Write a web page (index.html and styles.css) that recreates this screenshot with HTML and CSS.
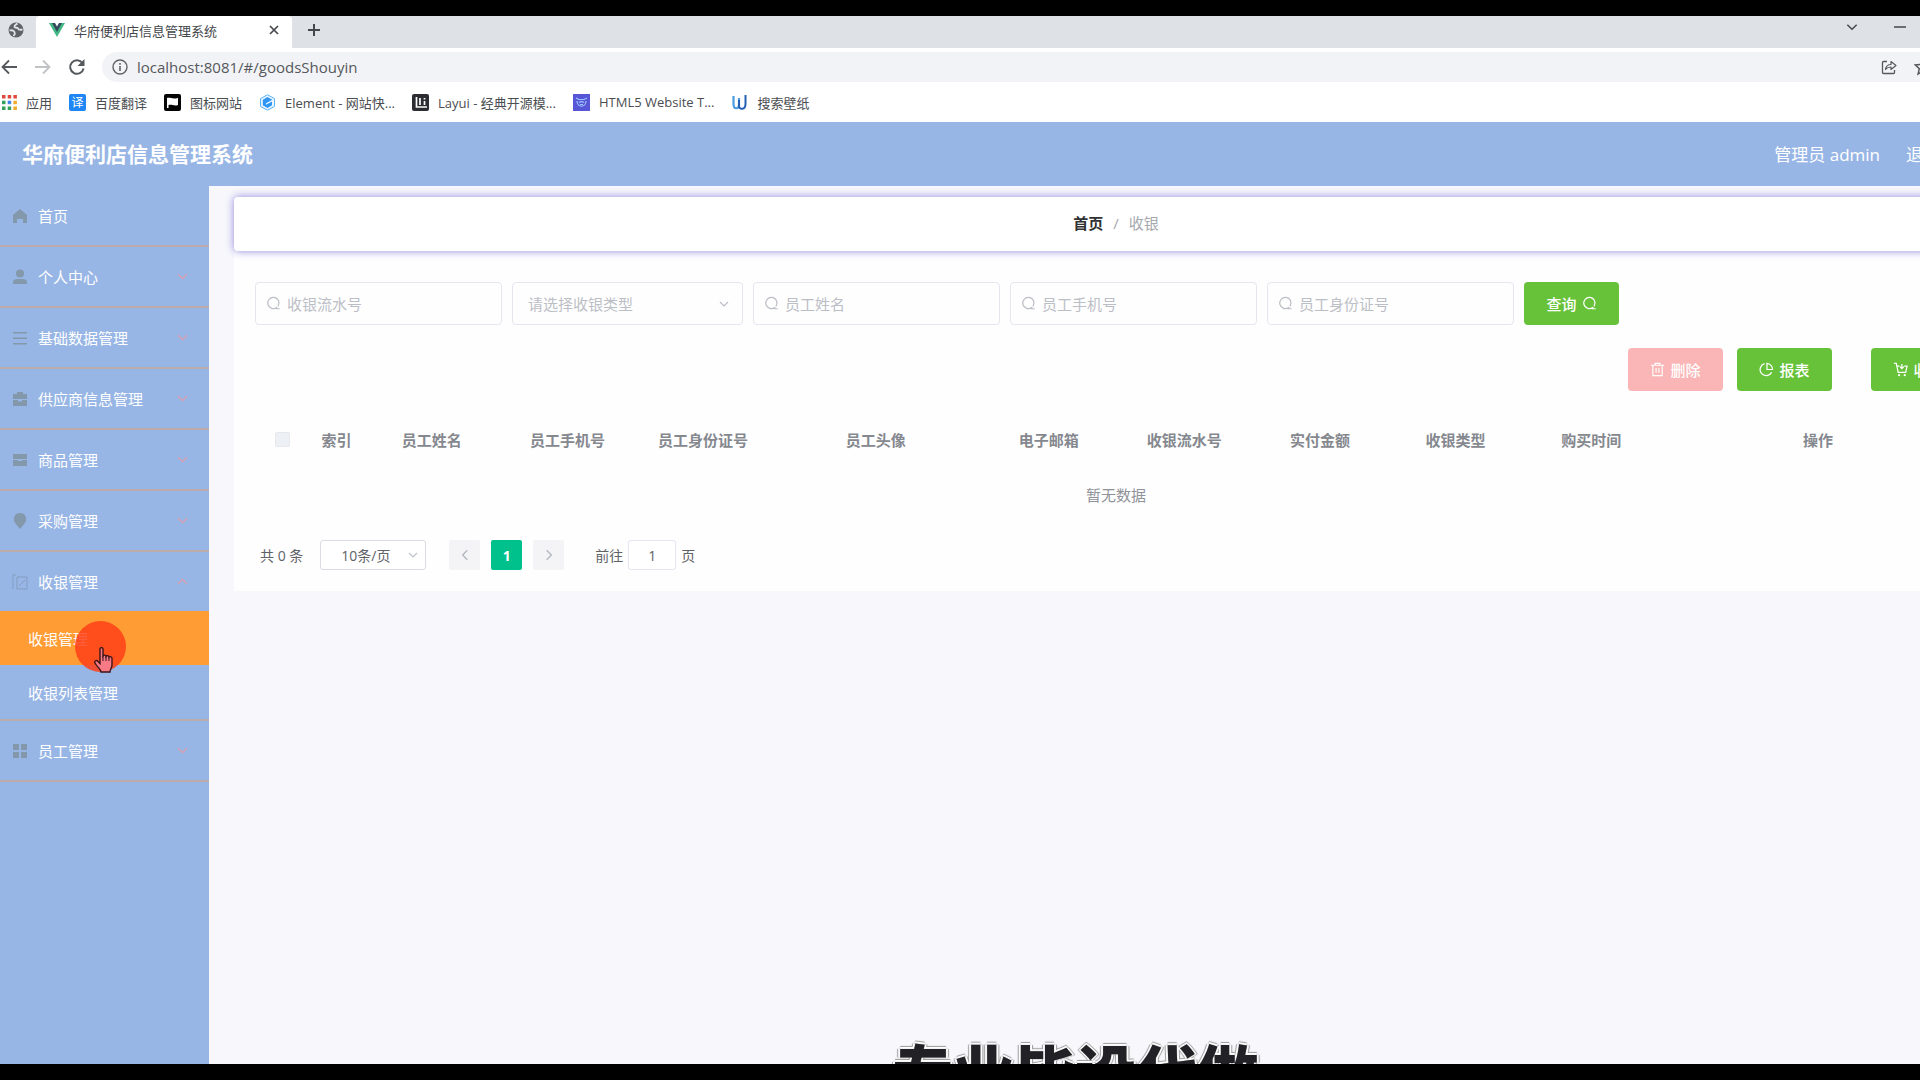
FILE: index.html
```html
<!DOCTYPE html>
<html lang="zh-CN">
<head>
    <meta charset="UTF-8">
    <meta name="viewport" content="width=device-width, initial-scale=1.0">
    <title>华府便利店信息管理系统</title>
    <link rel="stylesheet" href="styles.css">
</head>
<body>
    <svg class="sprite" aria-hidden="true">
        <symbol id="i-search" viewBox="0 0 16 16"><path d="M11.6 12.2A6 6 0 1 1 13 10.6M10.8 13.6h3.4" fill="none" stroke="currentColor" stroke-width="1.3" stroke-linecap="round"/></symbol>
        <symbol id="i-down" viewBox="0 0 12 12"><path d="M2 4l4 4 4-4" fill="none" stroke="currentColor" stroke-width="1.2"/></symbol>
        <symbol id="i-close" viewBox="0 0 12 12"><path d="M2 2l8 8M10 2l-8 8" stroke="currentColor" stroke-width="1.7"/></symbol>
    </svg>

    <div class="screen">
        <div class="window">
            <div class="tab-strip">
                <div class="tab tab-small">
                    <svg width="16" height="16" viewBox="0 0 16 16"><circle cx="8" cy="8" r="7.500" fill="#5f6368"/><path d="M1.500 8.500c2-.5 4 0 5 1.500s0 2.500-1 4M9.500 1.500c-2 1.500-3.500 2-3 3.500s3 0 3.500 1.500 2 1.500 4.500 1" fill="none" stroke="#dee1e6" stroke-width="1.800"/></svg>
                </div>
                <div class="tab tab-active">
                    <svg width="16" height="16" viewBox="0 0 16 16"><path d="M0 1h16L8 15z" fill="#41b883"/><path d="M3 1h10L8 10z" fill="#35495e"/><path d="M6 1h4L8 4.500z" fill="#fff"/></svg>
                    <span class="tab-title">华府便利店信息管理系统</span>
                    <button class="icon-btn" aria-label="关闭标签页"><svg width="12" height="12"><use href="#i-close"/></svg></button>
                </div>
                <button class="icon-btn new-tab" aria-label="新标签页"><svg width="14" height="14" viewBox="0 0 14 14"><path d="M7 1v12M1 7h12" stroke="currentColor" stroke-width="2"/></svg></button>
                <div class="window-controls">
                    <button class="icon-btn" aria-label="搜索标签页"><svg width="14" height="14"><use href="#i-down"/></svg></button>
                    <button class="icon-btn" aria-label="最小化"><svg width="12" height="12" viewBox="0 0 12 12"><path d="M0 6h12" stroke="currentColor" stroke-width="1.500"/></svg></button>
                    <button class="icon-btn" aria-label="最大化"><svg width="12" height="12" viewBox="0 0 12 12"><path d="M1 1h10v10H1z" fill="none" stroke="currentColor"/></svg></button>
                    <button class="icon-btn" aria-label="关闭"><svg width="12" height="12"><use href="#i-close"/></svg></button>
                </div>
            </div>

            <div class="toolbar">
                <button class="icon-btn" aria-label="后退"><svg width="18" height="18" viewBox="0 0 18 18"><path d="M17 9H3M9 2.500L2.500 9 9 15.500" fill="none" stroke="currentColor" stroke-width="1.800"/></svg></button>
                <button class="icon-btn is-muted" aria-label="前进"><svg width="18" height="18" viewBox="0 0 18 18"><path d="M1 9h14M9 2.500L15.500 9 9 15.500" fill="none" stroke="currentColor" stroke-width="1.800"/></svg></button>
                <button class="icon-btn" aria-label="刷新"><svg width="18" height="18" viewBox="0 0 18 18"><path d="M14.500 5A6.800 6.800 0 1 0 15.600 10.500" fill="none" stroke="currentColor" stroke-width="2"/><path d="M16.500 1v7h-7z" fill="currentColor"/></svg></button>
                <div class="address">
                    <svg width="16" height="16" viewBox="0 0 16 16"><circle cx="8" cy="8" r="7" fill="none" stroke="#5f6368" stroke-width="1.400"/><path d="M8 7v5M8 4v1.700" stroke="#5f6368" stroke-width="1.600"/></svg>
                    <input type="text" value="localhost:8081/#/goodsShouyin" aria-label="地址">
                    <button class="icon-btn" aria-label="分享"><svg width="16" height="16" viewBox="0 0 16 16"><path d="M6 2.500H2.500a1 1 0 0 0-1 1v10a1 1 0 0 0 1 1h10a1 1 0 0 0 1-1V11" fill="none" stroke="currentColor" stroke-width="1.300"/><path d="M4.500 10.500c.5-3.500 2.500-5 5.500-5v-3L15 6.500 10 10.500V8c-2.500 0-4 .6-5.500 2.500z" fill="none" stroke="currentColor" stroke-width="1.200" stroke-linejoin="round"/></svg></button>
                    <button class="icon-btn" aria-label="收藏"><svg width="18" height="18" viewBox="0 0 18 18"><path d="M9 1.500l2.300 5 5.400.5-4 3.700 1.200 5.300L9 13.200 4.100 16l1.200-5.300-4-3.700 5.400-.5z" fill="none" stroke="currentColor" stroke-width="1.500"/></svg></button>
                </div>
            </div>

            <nav class="bookmarks" aria-label="书签">
                <a href="#"><svg width="15" height="15" viewBox="0 0 15 15"><path d="M0 0h3.500v3.500H0zM5.700 0h3.500v3.500H5.700zM11.400 0h3.500v3.500h-3.500z" fill="#e0483c"/><path d="M0 5.700h3.500v3.500H0z" fill="#34a058"/><path d="M5.700 5.700h3.500v3.500H5.700z" fill="#4285e4"/><path d="M11.400 5.700h3.500v3.500h-3.500zM11.400 11.400h3.500v3.500h-3.500z" fill="#f0ab28"/><path d="M0 11.400h3.500v3.500H0zM5.700 11.400h3.500v3.500H5.700z" fill="#34a058"/></svg><span>应用</span></a>
                <a href="#"><i class="fav-text">译</i><span>百度翻译</span></a>
                <a href="#"><svg width="17" height="17" viewBox="0 0 17 17"><rect width="17" height="17" rx="2" fill="#050505"/><path d="M3 14V4c3-1 5 1.500 11 0v7c-4 1.500-6-1-9.500 0v3z" fill="#fff"/></svg><span>图标网站</span></a>
                <a href="#"><svg width="17" height="17" viewBox="0 0 17 17"><path d="M8.500.8l7 3.800v7.800l-7 3.800-7-3.800V4.600z" fill="#eaf5ff" stroke="#5ab4fa"/><path d="M8.500 3l4.800 2.700L7 9.200v1.500l6-3.200v3.800l-4.500 2.600-4.700-2.700V5.700z" fill="#2f96f3"/></svg><span>Element - 网站快...</span></a>
                <a href="#"><svg width="17" height="17" viewBox="0 0 17 17"><rect width="17" height="17" rx="2" fill="#2c2c33"/><path d="M4.500 3v10H15M8 4v7M12.500 7v4M12.500 4v1.500" fill="none" stroke="#fff" stroke-width="1.700"/></svg><span>Layui - 经典开源模...</span></a>
                <a href="#"><svg width="17" height="17" viewBox="0 0 17 17"><rect width="17" height="17" fill="#5656d6"/><path d="M3 4l3 1.500h5L14 4M4 7c0 7 9 7 9 0M6 8.500c1.500-1 3.500-1 5 0M7 10.500h3" fill="none" stroke="#9cc4ff" stroke-width="1.200"/></svg><span>HTML5 Website T...</span></a>
                <a href="#"><svg width="17" height="17" viewBox="0 0 17 17"><path d="M2.500 2v8c0 6 5.500 5 5.500 1V4" fill="none" stroke="#4b9de0" stroke-width="2.200"/><path d="M8 6v6c0 4 6.500 4 6.500-2V1" fill="none" stroke="#2460b4" stroke-width="2"/></svg><span>搜索壁纸</span></a>
            </nav>

            <header class="header">
                <h1>华府便利店信息管理系统</h1>
                <div class="user">
                    <span>管理员 admin</span>
                    <a href="#">退出登录</a>
                </div>
            </header>

            <div class="body">
                <aside class="sidebar">
                    <ul class="menu">
                        <li><a href="#"><svg viewBox="0 0 16 16"><path d="M8 1L1 7v8h4v-4h6v4h4V7z"/></svg><span>首页</span></a></li>
                        <li><a href="#"><svg viewBox="0 0 16 16"><circle cx="8" cy="4.500" r="4"/><path d="M1 15v-2c0-2 2-3 4-3h6c2 0 4 1 4 3v2z"/></svg><span>个人中心</span><svg class="arrow"><use href="#i-down"/></svg></a></li>
                        <li><a href="#"><svg viewBox="0 0 16 16"><path d="M1 2h14v1.500H1zM1 7.500h14V9H1zM1 13h14v1.500H1z"/></svg><span>基础数据管理</span><svg class="arrow"><use href="#i-down"/></svg></a></li>
                        <li><a href="#"><svg viewBox="0 0 16 16"><path d="M5 3V1h6v2h4v5H1V3zM1 9h5v1.500h4V9h5v6H1z"/></svg><span>供应商信息管理</span><svg class="arrow"><use href="#i-down"/></svg></a></li>
                        <li><a href="#"><svg viewBox="0 0 16 16"><path d="M1 2h14v5H1zM1 8h5v1h4V8h5v6H1z"/></svg><span>商品管理</span><svg class="arrow"><use href="#i-down"/></svg></a></li>
                        <li><a href="#"><svg viewBox="0 0 16 16"><path d="M8 16L3 10C0 5 3 0 8 0s8 5 5 10z"/></svg><span>采购管理</span><svg class="arrow"><use href="#i-down"/></svg></a></li>
                        <li>
                            <a href="#"><svg viewBox="0 0 16 16"><path d="M1 1v14M5 3h10v12H5zM7 12l6-6M1 1h3" fill="none" stroke="currentColor"/></svg><span>收银管理</span><svg class="arrow up"><use href="#i-down"/></svg></a>
                            <ul class="submenu">
                                <li class="active"><a href="#">收银管理</a></li>
                                <li><a href="#">收银列表管理</a></li>
                            </ul>
                        </li>
                        <li><a href="#"><svg viewBox="0 0 16 16"><path d="M1 1h6v6H1zM9 1h6v6H9zM1 9h6v6H1zM9 9h6v6H9z"/></svg><span>员工管理</span><svg class="arrow"><use href="#i-down"/></svg></a></li>
                    </ul>
                </aside>

                <main class="main">
                    <nav class="breadcrumb" aria-label="面包屑">
                        <a href="#">首页</a><span>/</span><span>收银</span>
                    </nav>

                    <section class="card">
                        <form class="search-form">
                            <label class="field"><svg><use href="#i-search"/></svg><input type="text" placeholder="收银流水号" aria-label="收银流水号"></label>
                            <label class="field field-select">
                                <select aria-label="收银类型"><option>请选择收银类型</option></select>
                                <svg><use href="#i-down"/></svg>
                            </label>
                            <label class="field"><svg><use href="#i-search"/></svg><input type="text" placeholder="员工姓名" aria-label="员工姓名"></label>
                            <label class="field"><svg><use href="#i-search"/></svg><input type="text" placeholder="员工手机号" aria-label="员工手机号"></label>
                            <label class="field"><svg><use href="#i-search"/></svg><input type="text" placeholder="员工身份证号" aria-label="员工身份证号"></label>
                            <button type="button" class="btn btn-success">查询<svg><use href="#i-search"/></svg></button>
                        </form>

                        <div class="actions">
                            <button class="btn btn-danger" disabled><svg viewBox="0 0 16 16"><path d="M1 3.500h14M5.500 3.500V1.500h5v2M3 3.500v11h10v-11M6.500 6.500v5M9.500 6.500v5" fill="none" stroke="currentColor" stroke-width="1.200"/></svg>删除</button>
                            <button class="btn btn-success"><svg viewBox="0 0 16 16"><path d="M8.500 1.500V8h6A6.500 6.500 0 0 0 8.500 1.500zM13.500 11A6.500 6.500 0 1 1 6 1.800" fill="none" stroke="currentColor" stroke-width="1.300"/></svg>报表</button>
                            <button class="btn btn-success btn-cash"><svg viewBox="0 0 16 16"><path d="M1 1.500h2.500l2 9.500h8L15 4.500h-3M4.200 4.500H7M9.500 2v5M7.500 5l2 2 2-2" fill="none" stroke="currentColor" stroke-width="1.300"/><circle cx="6.500" cy="14" r="1.200" fill="currentColor"/><circle cx="12.500" cy="14" r="1.200" fill="currentColor"/></svg>收银</button>
                        </div>

                        <table class="table">
                            <colgroup>
                                <col class="col-check"><col class="col-index"><col><col><col><col class="col-photo"><col><col><col><col><col><col class="col-ops">
                            </colgroup>
                            <thead>
                                <tr>
                                    <th scope="col"><input type="checkbox" disabled aria-label="全选"></th>
                                    <th scope="col">索引</th>
                                    <th scope="col">员工姓名</th>
                                    <th scope="col">员工手机号</th>
                                    <th scope="col">员工身份证号</th>
                                    <th scope="col">员工头像</th>
                                    <th scope="col">电子邮箱</th>
                                    <th scope="col">收银流水号</th>
                                    <th scope="col">实付金额</th>
                                    <th scope="col">收银类型</th>
                                    <th scope="col">购买时间</th>
                                    <th scope="col">操作</th>
                                </tr>
                            </thead>
                            <tbody>
                                <tr><td colspan="12">暂无数据</td></tr>
                            </tbody>
                        </table>

                        <div class="pagination">
                            <span>共 0 条</span>
                            <label class="page-size">
                                <select aria-label="每页条数"><option>10条/页</option></select>
                                <svg><use href="#i-down"/></svg>
                            </label>
                            <div class="pager">
                                <button disabled aria-label="上一页"><svg class="prev"><use href="#i-down"/></svg></button>
                                <button class="current">1</button>
                                <button disabled aria-label="下一页"><svg class="next"><use href="#i-down"/></svg></button>
                            </div>
                            <label class="jump">前往<input type="text" value="1">页</label>
                        </div>
                    </section>
                </main>
            </div>
        </div>

        <div class="click-spot">
            <svg width="22" height="27" viewBox="0 0 22 27"><path d="M7 2c0-1.800 3-1.800 3 0v7c1-1.500 3-1 3 .5 1-1.500 3-.8 3 .7 1.200-1 3-.4 3 1.300v6.500c0 3-2 4-2 7H8c0-3-4-5-6-9-1-2 1.500-3.500 3-1.500l2 2z" fill="#f77a86" stroke="#3b1518" stroke-width="1.400"/><path d="M10 9v5M13 10v4M16 11v3" stroke="#3b1518"/></svg>
        </div>
        <p class="caption">专业毕设代做</p>
    </div>
</body>
</html>
```

FILE: styles.css
```css
:root {
    --blue: #98b6e5;
    --orange: #ff9c33;
    --green: #67c23a;
    --border: #e4e6f0;
    --text: #606266;
    --placeholder: #bcbec6;
}

* {
    box-sizing: border-box;
}

body {
    margin: 0;
    background: #000;
    font-family: "Open Sans", "Noto Sans CJK SC", sans-serif;
    font-size: 15px;
    color: var(--text);
}

h1, p, ul {
    margin: 0;
    padding: 0;
}

ul {
    list-style: none;
}

a {
    color: inherit;
    text-decoration: none;
}

button, input, select {
    font: inherit;
    color: inherit;
}

button {
    border: none;
    padding: 0;
    cursor: pointer;
}

svg {
    flex: none;
}

.sprite {
    display: none;
}

/* recorded screen between the two black bars */
.screen {
    position: relative;
    height: calc(100vh - 32px);
    margin: 16px 0;
    overflow: hidden;
    background: #f7f7fc;
}

/* the window runs past the right edge of the screen */
.window {
    display: flex;
    flex-direction: column;
    width: calc(100% + 100px);
    height: 100%;
}

/* browser */
.tab-strip {
    display: flex;
    height: 32px;
    background: #dee1e5;
    color: #44474b;
}

.tab {
    display: flex;
    align-items: center;
    padding-bottom: 4px;
}

.tab-small {
    width: 36px;
    padding-left: 8px;
}

.tab-active {
    width: 256px;
    padding-left: 13px;
    padding-right: 12px;
    background: #fff;
    border-radius: 4px 4px 0 0;
    font-size: 13px;
}

.tab-title {
    flex: 1;
    margin-left: 9px;
}

.icon-btn {
    display: flex;
    align-items: center;
    justify-content: center;
    background: none;
}

.new-tab {
    margin-left: 15px;
    padding-bottom: 4px;
}

.window-controls {
    display: flex;
    margin-left: auto;
}

.window-controls .icon-btn {
    width: 48px;
    height: 22px;
}

.toolbar {
    display: flex;
    align-items: center;
    gap: 16px;
    height: 38px;
    padding: 0 76px 0 0;
    background: #fff;
    color: #55585c;
}

.is-muted {
    color: #c0c2c6;
}

.address {
    flex: 1;
    display: flex;
    align-items: center;
    gap: 9px;
    height: 30px;
    padding: 0 12px 0 10px;
    background: #f2f3f6;
    border-radius: 15px;
}

.address input {
    flex: 1;
    border: none;
    background: none;
    padding: 0;
    font-size: 15px;
    outline: none;
}

.address .icon-btn + .icon-btn {
    margin-left: 8px;
}

.bookmarks {
    display: flex;
    gap: 17px;
    height: 36px;
    padding: 0 2px 4px;
    background: #fff;
    font-size: 13px;
    color: #4a4d52;
}

.bookmarks a {
    display: flex;
    align-items: center;
    gap: 9px;
}

.fav-text {
    width: 17px;
    background: #1e86f5;
    border-radius: 2px;
    color: #fff;
    font-size: 12px;
    font-style: normal;
    line-height: 17px;
    text-align: center;
}

/* app header */
.header {
    display: flex;
    align-items: center;
    justify-content: space-between;
    height: 64px;
    padding: 0 46px 2px 22px;
    background: var(--blue);
    color: #fff;
}

.header h1 {
    font-size: 21px;
    font-weight: 700;
}

.user {
    display: flex;
    gap: 26px;
    font-size: 17px;
}

.body {
    flex: 1;
    display: flex;
    min-height: 0;
}

/* sidebar */
.sidebar {
    width: 209px;
    background: var(--blue);
    color: #fff;
}

.menu > li {
    border-bottom: 2px solid #bcabaa;
}

.menu > li > a {
    display: flex;
    align-items: center;
    height: 59px;
    padding: 0 20px 0 12px;
}

.menu svg {
    width: 16px;
    height: 16px;
    margin-right: 10px;
    fill: #8398ab;
    color: #839cc0;
}

.menu .arrow {
    width: 13px;
    height: 13px;
    margin: 0 0 0 auto;
    fill: none;
    color: #dc9fae;
}

.menu .up {
    transform: rotate(180deg);
}

.submenu a {
    display: flex;
    align-items: center;
    height: 54px;
    padding-left: 28px;
}

.submenu .active {
    background: var(--orange);
}

/* content */
.main {
    flex: 1;
    padding: 11px 22px 0 25px;
}

.breadcrumb {
    position: relative;
    display: flex;
    align-items: center;
    justify-content: center;
    gap: 10px;
    height: 54px;
    padding-bottom: 3px;
    background: #fff;
    border-radius: 4px;
    box-shadow: 0 0 8px #8f86dc;
    color: #a5a8ae;
}

.breadcrumb a {
    color: #303133;
    font-weight: 700;
}

.card {
    padding: 31px 21px 21px;
    background: #fefeff;
}

.search-form {
    display: flex;
    gap: 10px;
}

.field {
    position: relative;
    display: flex;
    align-items: center;
    width: 247px;
    height: 43px;
    border: 1px solid var(--border);
    border-radius: 4px;
    color: var(--placeholder);
}

.field svg {
    width: 15px;
    height: 15px;
    margin: 0 6px 0 10px;
}

.field input, .field select {
    flex: 1;
    min-width: 0;
    height: 100%;
    padding: 0;
    border: none;
    background: none;
    outline: none;
}

.field input::placeholder {
    color: var(--placeholder);
}

.field-select {
    width: 231px;
}

.field select {
    appearance: none;
    padding: 0 30px 0 15px;
}

.field-select svg {
    position: absolute;
    right: 12px;
    width: 12px;
    height: 12px;
    margin: 0;
    pointer-events: none;
}

.btn {
    display: flex;
    align-items: center;
    justify-content: center;
    gap: 5px;
    width: 95px;
    height: 43px;
    border-radius: 4px;
    color: #fff;
    font-weight: 500;
}

.btn svg {
    width: 15px;
    height: 15px;
}

.btn-success {
    background: var(--green);
}

.btn-danger {
    background: #fab6b6;
}

.actions {
    display: flex;
    justify-content: flex-end;
    gap: 14px;
    margin-top: 23px;
    padding-right: 11px;
}

.btn-cash {
    margin-left: 25px;
}

.table {
    width: 100%;
    margin-top: 20px;
    table-layout: fixed;
    border-collapse: collapse;
    text-align: center;
}

.table th {
    height: 56px;
    padding: 0;
    color: #85888e;
    font-weight: 700;
}

.table td {
    height: 55px;
    padding: 0;
    color: #909399;
}

.table input {
    appearance: none;
    display: block;
    width: 15px;
    height: 15px;
    margin: 0 auto;
    border: 1px solid #e6e8ee;
    border-radius: 2px;
    background: #edf0f5;
}

.col-check {
    width: 54px;
}

.col-index {
    width: 55px;
}

.col-photo {
    width: 210px;
}

.col-ops {
    width: 318px;
}

.pagination {
    display: flex;
    align-items: center;
    margin-top: 18px;
    padding-left: 5px;
    font-size: 14px;
}

.page-size {
    position: relative;
    display: flex;
    align-items: center;
    width: 106px;
    height: 30px;
    margin: 0 23px 0 17px;
}

.page-size select {
    appearance: none;
    width: 100%;
    height: 100%;
    padding: 0 20px;
    border: 1px solid #d9dce3;
    border-radius: 3px;
    background: #fff;
}

.page-size svg {
    position: absolute;
    right: 7px;
    width: 12px;
    height: 12px;
    color: #c0c4cc;
    pointer-events: none;
}

.pager {
    display: flex;
    gap: 11px;
}

.pager button {
    display: flex;
    align-items: center;
    justify-content: center;
    width: 31px;
    height: 30px;
    border-radius: 2px;
    background: #f4f4f7;
    color: #b4b8c0;
}

.pager .current {
    background: #00c08b;
    color: #fff;
    font-weight: 700;
}

.pager svg {
    width: 14px;
    height: 14px;
}

.prev {
    transform: rotate(90deg);
}

.next {
    transform: rotate(-90deg);
}

.jump {
    display: flex;
    align-items: center;
    gap: 5px;
    margin-left: 31px;
}

.jump input {
    width: 48px;
    height: 30px;
    border: 1px solid var(--border);
    border-radius: 3px;
    background: #fff;
    text-align: center;
}

/* recording overlays */
.click-spot {
    position: absolute;
    left: 75px;
    top: 605px;
    width: 51px;
    height: 51px;
    padding: 26px 0 0 18px;
    border-radius: 50%;
    background: rgba(255, 64, 24, 0.85);
}

.caption {
    position: absolute;
    left: 56%;
    bottom: -46px;
    color: #222226;
    font-size: 61px;
    font-weight: 900;
    line-height: 72px;
    white-space: nowrap;
    transform: translateX(-50%);
    text-shadow: 0 0 1px #888, 2px 0 #fff, -2px 0 #fff, 0 -2px #fff, 3px 0 1px #999, -3px 0 1px #999, 0 -3px 1px #999;
}
```
